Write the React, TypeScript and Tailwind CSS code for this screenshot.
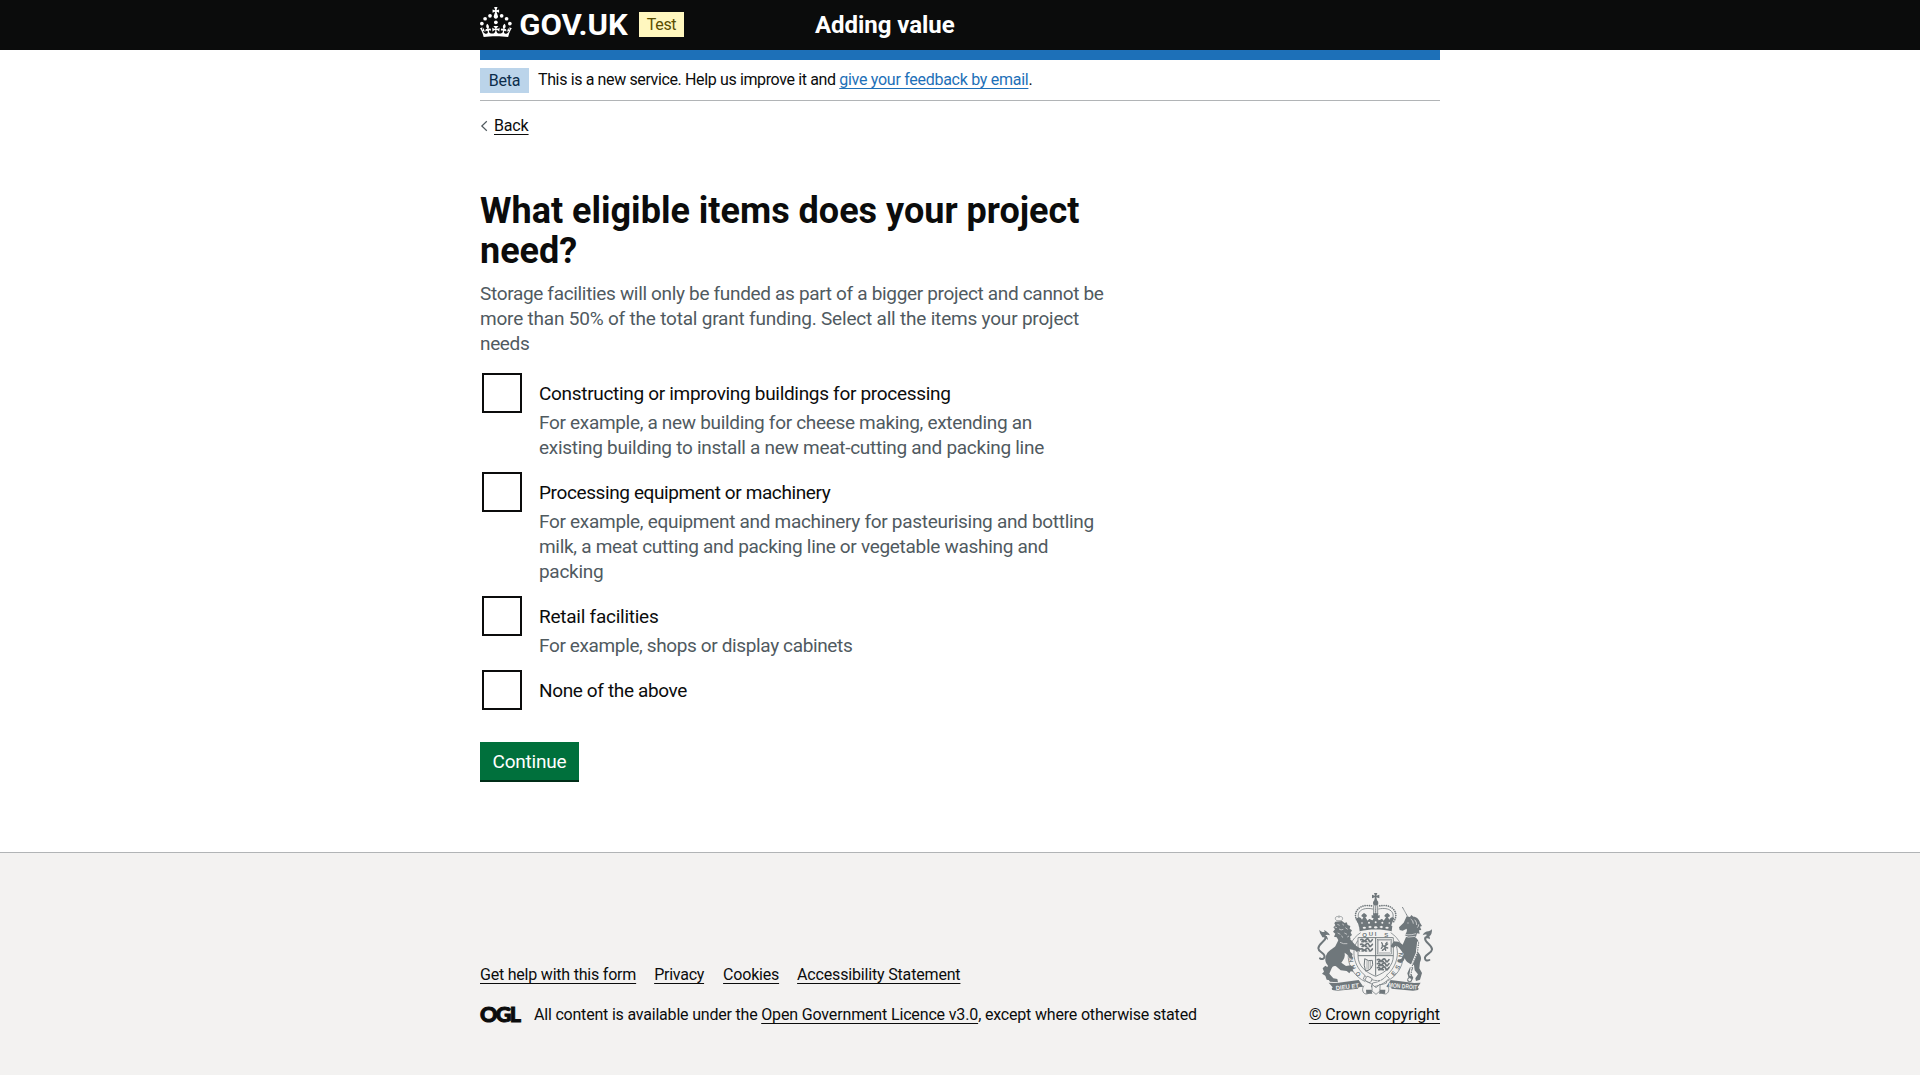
import type { ReactNode } from 'react';

function GovCrown() {
  return (
    <svg viewBox="0 0 324 60" className="h-[30px] w-[162px] shrink-0 overflow-visible fill-white" role="img" aria-label="GOV.UK">
      <circle cx="20" cy="17.6" r="3.7" />
      <circle cx="10.2" cy="23.5" r="3.7" />
      <circle cx="3.7" cy="33.2" r="3.7" />
      <circle cx="31.7" cy="30.6" r="3.7" />
      <circle cx="43.3" cy="17.6" r="3.7" />
      <circle cx="53.2" cy="23.5" r="3.7" />
      <circle cx="59.7" cy="33.2" r="3.7" />
      <path d="M33.1,9.8c.2-.1.3-.3.5-.5l4.6,2.4v-6.8l-4.6,1.5c-.1-.2-.3-.3-.5-.5l1.9-5.9h-6.7l1.9,5.9c-.2.1-.3.3-.5.5l-4.6-1.5v6.8l4.6-2.4c.1.2.3.3.5.5l-2.6,8c-.9,2.8,1.2,5.7,4.1,5.7h0c3,0,5.1-2.9,4.1-5.7l-2.6-8ZM37,37.9s-3.4,3.8-4.1,6.1c2.2,0,4.2-.5,6.4-2.8l-.7,8.5c-2-2.8-4.4-4.1-5.7-3.8.1,3.1.5,6.7,5.8,7.2,3.7.3,6.7-1.5,7-3.8.4-2.6-2-4.3-3.7-1.6-1.4-4.5,2.4-6.1,4.9-3.2-1.9-4.5-1.8-7.7,2.4-10.9,3,4,2.6,7.3-1.2,11.1,2.4-1.3,6.2,0,4,4.6-1.2-2.8-3.7-2.2-4.2.2-.3,1.7.7,3.7,3,4.2,1.9.3,4.7-.9,7-5.9-1.3,0-2.4.7-3.9,1.7l2.4-8c.6,2.3,1.4,3.7,2.2,4.5.6-1.6.5-2.8,0-5.3l5,1.8c-2.6,3.6-5.2,8.7-7.3,17.5-7.4-1.1-15.7-1.7-24.5-1.7h0c-8.8,0-17.1.6-24.5,1.7-2.1-8.9-4.7-13.9-7.3-17.5l5-1.8c-.5,2.5-.6,3.7,0,5.3.8-.8,1.6-2.3,2.2-4.5l2.4,8c-1.5-1-2.6-1.7-3.9-1.7,2.3,5,5.2,6.2,7,5.9,2.3-.4,3.3-2.4,3-4.2-.5-2.4-3-3.1-4.2-.2-2.2-4.6,1.6-6,4-4.6-3.7-3.7-4.2-7.1-1.2-11.1,4.2,3.2,4.3,6.4,2.4,10.9,2.5-2.8,6.3-1.3,4.9,3.2-1.8-2.7-4.1-1-3.7,1.6.3,2.3,3.3,4.1,7,3.8,5.4-.5,5.7-4.2,5.8-7.2-1.3-.2-3.7,1-5.7,3.8l-.7-8.5c2.2,2.3,4.2,2.7,6.4,2.8-.7-2.3-4.1-6.1-4.1-6.1h10.6,0Z" />
      <text x="78.5" y="55.6" textLength="217" lengthAdjust="spacingAndGlyphs" className="font-['Roboto'] text-[60px] font-bold">
        GOV.UK
      </text>
    </svg>
  );
}

function OglLogo() {
  return (
    <svg viewBox="0 0 41 17" className="mr-[13px] h-[17px] w-[41px] shrink-0 overflow-visible fill-[#0b0c0c] stroke-[#0b0c0c]" role="img" aria-label="OGL">
      <text x="0" y="14.8" textLength="41" lengthAdjust="spacing" strokeWidth="1" className="font-['Lato'] text-[21.5px] font-black">
        OGL
      </text>
    </svg>
  );
}

const shieldLions = [
  [212, 178], [212, 192], [212, 206],
  [262, 238], [262, 250], [262, 262],
];

function RoyalCrest() {
  return (
    <svg viewBox="81 38 348 306" className="h-[102px] w-[116px] fill-[#6f777b] stroke-[#6f777b]" role="img" aria-label="Royal coat of arms">
      {/* crown: cross, orb, arches and jewelled rim */}
      <g strokeLinecap="round">
        <path stroke="none" d="M252 38h10l-3 8 9-3v11l-9-3 3 12h-10l3-12-9 3v-11l9 3z" />
        <circle cx="257" cy="68" r="8" stroke="none" />
        <g fill="none">
          <path strokeWidth="5" strokeDasharray="0.1 6.4" d="M203 124C184 98 208 66 250 78M311 124C330 98 306 66 264 78" />
          <path strokeWidth="2.4" d="M208 118C196 98 214 78 248 86M306 118C318 98 300 78 266 86" />
          <path strokeWidth="2.4" d="M251 76V112M263 76V112" />
          <path strokeWidth="5" strokeDasharray="0.1 6" d="M257 80V104" />
        </g>
        <path stroke="none" d="M201 114c5-6 12-4 15 4l4-7-6-3c0-5 4-7 8-10 5 3 9 5 9 10l-5 3 7 10c3-5 7-7 10-3l5 2 3-6-6-2v-8l6 2-2-7h16l-2 7 6-2v8l-6 2 3 6 5-2c3-4 7-2 10 3l7-10-5-3c0-5 4-7 9-10 4 3 8 5 8 10l-6 3 4 7c3-8 10-10 15-4-4 8-8 16-10 26-28-6-68-6-96 0-2-10-6-18-10-26z" />
        <path stroke="none" d="M207 137c30-7 70-7 100 0l-2 16c-28-7-68-7-96 0z" />
        <g fill="#f3f2f1" stroke="none">
          <ellipse cx="223" cy="142" rx="5" ry="3" />
          <path d="M240 136l6 4-6 4-6-4zM274 136l6 4-6 4-6-4z" />
          <ellipse cx="257" cy="141" rx="5" ry="3.5" />
          <ellipse cx="291" cy="142" rx="5" ry="3" />
          <circle cx="237" cy="127" r="3" />
          <circle cx="257" cy="126" r="3" />
          <circle cx="277" cy="127" r="3" />
          <circle cx="216" cy="128" r="2.5" />
          <circle cx="298" cy="128" r="2.5" />
        </g>
      </g>

      {/* garter */}
      <g fill="none" strokeWidth="2.2">
        <path d="M212 157C158 192 162 274 226 304M302 157C356 192 352 274 288 304" />
        <path d="M206 172h102" />
        <path d="M204 180C182 208 190 258 226 286M310 180C332 208 324 258 288 286" />
      </g>
      <g stroke="none" className="font-['Liberation_Sans'] text-[18px] font-bold">
        <text x="217" y="169">Q</text>
        <text x="236" y="167">U</text>
        <text x="254" y="167">I</text>
        <text x="283" y="170">S</text>
        <text transform="translate(199 285) rotate(52)" textAnchor="middle">O</text>
        <text transform="translate(184 263) rotate(68)" textAnchor="middle">H</text>
        <text transform="translate(177 240) rotate(82)" textAnchor="middle">N</text>
        <text transform="translate(338 224) rotate(-86)" textAnchor="middle">N</text>
        <text transform="translate(336 244) rotate(-76)" textAnchor="middle">E</text>
        <text transform="translate(328 264) rotate(-62)" textAnchor="middle">S</text>
        <text transform="translate(315 283) rotate(-48)" textAnchor="middle">E</text>
      </g>

      {/* quartered shield */}
      <path fill="#f3f2f1" strokeWidth="2.4" d="M204 172h106v54c0 32-24 50-53 62-29-12-53-30-53-62z" />
      <path fill="none" strokeWidth="3" d="M257 172v114M204 226h106" />
      <g fill="none" strokeWidth="5" strokeLinecap="round">
        {shieldLions.map(([x, y]) => (
          <path key={`${x}-${y}`} d={`M${x} ${y}q5-2 8 2t8-2t9 2t10-2M${x + 4} ${y + 6}h4M${x + 14} ${y + 6}h4M${x + 26} ${y + 6}h4`} />
        ))}
      </g>
      <rect x="262" y="177" width="43" height="44" fill="none" strokeWidth="1.8" />
      <rect x="266" y="181" width="35" height="36" fill="none" strokeWidth="1" />
      <path fill="none" strokeWidth="4" strokeLinecap="round" d="M275 187q4 4 2 9l8 1 8-6M279 197l-5 7M284 198l3 12M284 200l9 3M277 210l7-5M291 186l-4 5" />
      <path fill="none" strokeWidth="3" strokeLinecap="round" d="M224 236q-4 20 2 34M225 236q10 8 22 4q4 14-4 24q-6 8-16 8" />
      <path fill="none" strokeWidth="1.6" d="M231 240v28M236 242v27M241 242v23" />

      {/* buckle and strap */}
      <g fill="#f3f2f1" strokeWidth="2.2">
        <path d="M224 286c16 14 42 20 62 10l4 12c-22 10-50 6-70-12z" />
        <path d="M290 286c-8 10-24 20-42 22l-4 12c22-2 42-12 54-26z" />
        <rect x="227" y="290" width="18" height="15" rx="4" transform="rotate(26 236 297)" />
        <path d="M246 312l12 10 12-10v20l-12 10-12-10z" />
        <path d="M222 316c-8 10-4 24 6 25 9 0 16-6 18-14M292 316c8 10 4 24-6 25-9 0-14-6-16-14" />
      </g>
      <path stroke="none" d="M228 328h16l3 12h-18zM286 328h-16l-3 12h18z" />
      <g fill="#f3f2f1" stroke="none">
        <circle cx="262" cy="302" r="1.5" />
        <circle cx="272" cy="300" r="1.5" />
      </g>

      {/* lion supporter */}
      <g stroke="none">
        <path fill="none" className="stroke-[#6f777b]" strokeWidth="1.8" d="M140 121c-9-7-1-17 7-10 7-7 16 3 7 10zM147 105v6" />
        <path d="M136 124l20-2 8 6 6-2 3 8 8 3-2 8 7 5-4 7 4 7-6 5 2 7-12 6-14-4-10 3-6-10-8-2 4-9-7-6 6-7-5-6 6-6-3-6z" />
        <path d="M148 174c14-6 28-2 36 6 6 8 12 16 20 20l10 6-5 2 2 7-7-4-3 5-6-6-16-3 2 8 7 6-2 6 4 6-6 1-6-1-4-8-10-8c2 12-2 20-10 30l14 10 14-2 10 8-5 3 4 8-9-1-4 6-8-7-18-2-14-12c-6-2-10 0-13 6l-7 16 12 14 12 2 2 10-24-2-14-20c0-12 4-20 8-28-10-10-10-22-4-34 6-12 18-16 26-24z" />
        <path d="M106 256l-8 8 4 10-6 6 10 6 4 12 10 2 2-10-7-10 6-14z" />
        <path d="M88 148c4 6 10 8 16 7l-2-6c8 4 14 8 18 16-6-2-10-3-14 0 6 4 8 9 8 14-6-7-12-10-17-8-2-8-8-10-9-23z" />
      </g>
      <path fill="none" strokeWidth="6" strokeLinecap="round" d="M108 170c-2 14-22 18-23 34 0 10 14 12 18 21 3 9-6 14-13 9" />
      <g stroke="#f3f2f1" strokeWidth="1.8" fill="none">
        <path d="M142 132l7 3M157 131l5 4M147 146q6 5 13 1M166 142l7 5M143 158l8 4M163 158l8 4M155 166l3 6M134 140l7 2M172 170l5-3" />
        <path d="M150 186q10 6 22 4" />
      </g>

      {/* unicorn supporter */}
      <path fill="none" strokeWidth="3" strokeDasharray="3 1" d="M337 80L353 109" />
      <g stroke="none">
        <path d="M350 108l10 2 4-6 6 5c10 0 18 8 20 18l6 10-6 2 4 10-7 1 2 10-8-1-3 10-20 2-14-6c6-8 8-14 6-20l-12 6-9-2-2-8 14-14z" />
        <path d="M348 170c14-6 30-2 36 10 4 10 0 22-6 30 12 10 20 22 12 36l-2 18 8 14-6 20-12 4-2-8 8-12-10-12-2-16c-14-2-22-8-28-20-4 12-10 14-20 11l-2-6 12-4 8-14-8-10c-6-8-10-14-18-14-4 6-10 6-14 0l8-12c14-4 20 2 28 8z" />
        <path d="M370 262l-8 16 8 14-6 12-12-1 4-10-4-14 8-18z" />
        <path d="M426 146c0 12-2 18-8 22 2 4 2 6 1 9-5-4-9-4-14 0 0-6 2-10 6-13-4-2-8-2-13 1 4-9 10-12 17-12 4-1 8-3 11-7z" />
      </g>
      <path fill="none" strokeWidth="6" strokeLinecap="round" d="M406 172c-6 12 18 20 20 34 1 12-18 14-21 25-1 9 6 12 13 8" />
      <g fill="none" stroke="#f3f2f1" strokeWidth="2">
        <path d="M362 116q8 4 8 14M374 118q6 6 6 16M386 132q0 6-4 10M352 128h4M334 158q18 10 44 2M336 165q18 9 40 3" />
        <path d="M384 184l-4 34-14 34-6 34" strokeWidth="5" />
      </g>
      <path fill="none" strokeWidth="3.4" strokeDasharray="4 3" d="M386 186l-4 32-14 34-6 36" />
      <circle cx="359" cy="298" r="6" fill="#f3f2f1" strokeWidth="3" />

      {/* motto ribbons */}
      <path stroke="none" d="M116 307l24 1 66-9 14 20-14 2-2 4-62 6-15-2-2-4 3-4z" />
      <path stroke="none" d="M392 307l-20 1-70-9-13 20 14 2 2 4 64 6 15-2 2-4-3-4z" />
      <g fill="#f3f2f1" stroke="none" className="font-['Liberation_Sans'] text-[19px] font-bold">
        <text x="137" y="326" textLength="70" lengthAdjust="spacingAndGlyphs" transform="rotate(-6 170 318)">DIEU ET</text>
        <text x="296" y="324" textLength="86" lengthAdjust="spacingAndGlyphs" transform="rotate(5 340 318)">MON DROIT</text>
      </g>
    </svg>
  );
}

function Link({ children, className = '' }: { children: ReactNode; className?: string }) {
  return (
    <a href="#" className={`underline decoration-1 underline-offset-[3px] [text-decoration-skip-ink:none] ${className}`}>
      {children}
    </a>
  );
}

type Line = { text: string; tracking: string };
type Option = { label: Line; hint: Line[] };

const options: Option[] = [
  {
    label: { text: 'Constructing or improving buildings for processing', tracking: 'tracking-[-0.31px]' },
    hint: [
      { text: 'For example, a new building for cheese making, extending an', tracking: 'tracking-[-0.32px]' },
      { text: 'existing building to install a new meat-cutting and packing line', tracking: 'tracking-[-0.28px]' },
    ],
  },
  {
    label: { text: 'Processing equipment or machinery', tracking: 'tracking-[-0.39px]' },
    hint: [
      { text: 'For example, equipment and machinery for pasteurising and bottling', tracking: 'tracking-[-0.3px]' },
      { text: 'milk, a meat cutting and packing line or vegetable washing and', tracking: 'tracking-[-0.3px]' },
      { text: 'packing', tracking: 'tracking-[-0.3px]' },
    ],
  },
  {
    label: { text: 'Retail facilities', tracking: 'tracking-[-0.25px]' },
    hint: [{ text: 'For example, shops or display cabinets', tracking: 'tracking-[-0.37px]' }],
  },
  { label: { text: 'None of the above', tracking: 'tracking-[-0.36px]' }, hint: [] },
];

function CheckboxItem({ label, hint }: Option) {
  return (
    <div className="flex">
      <div className="mt-0.5 ml-0.5 h-10 w-10 shrink-0 border-2 border-[#0b0c0c] bg-white" />
      <div className="ml-[17px] whitespace-nowrap">
        <div className={`pt-[10px] pb-1 leading-[25px] ${label.tracking}`}>{label.text}</div>
        {hint.length === 0 && <div className="h-[5px]" />}
        {hint.map((line) => (
          <div key={line.text} className={`leading-[25px] text-[#505a5f] ${line.tracking}`}>
            {line.text}
          </div>
        ))}
      </div>
    </div>
  );
}

export default function App() {
  return (
    <div className="flex min-h-[1075px] flex-col bg-white font-['Roboto',sans-serif] text-base text-[#0b0c0c]">
      <header className="h-[50px] bg-[#0b0c0c]">
        <div className="mx-auto flex h-full w-[960px] items-start">
          <div className="flex w-[335px] items-start">
            <div className="-mr-[3px] pt-[7px]">
              <GovCrown />
            </div>
            <span className="mt-3 flex h-[25px] w-[45px] items-center justify-center bg-[#fff7bf] text-base tracking-[-0.3px] text-[#594d00]">
              Test
            </span>
          </div>
          <div className="pt-[10px] text-2xl leading-[30px] font-bold tracking-[-0.05px] whitespace-nowrap text-white">Adding value</div>
        </div>
      </header>

      <div className="mx-auto w-[960px]">
        <div className="h-[10px] bg-[#1d70b8]" />
        <div className="flex h-[41px] items-start border-b border-[#b1b4b6] pt-2">
          <strong className="mr-[9px] flex h-[25px] w-[49px] items-center justify-center bg-[#bbd4ea] font-normal tracking-[-0.2px] text-[#0c2d4a]">
            Beta
          </strong>
          <p className="leading-[23px] whitespace-nowrap">
            <span className="tracking-[-0.37px]">This is a new service. Help us improve it and </span>
            <Link className="tracking-[-0.28px] text-[#1d70b8]">give your feedback by email</Link>.
          </p>
        </div>

        <div className="mt-[15px] flex h-5 items-center">
          <svg viewBox="0 0 8 12" className="mr-[6px] h-3 w-2 fill-none stroke-[#505a5f]" strokeWidth="1.2">
            <path d="M6.8 1.2L1.8 6L6.8 10.8" />
          </svg>
          <Link className="leading-5 tracking-[-0.15px]">Back</Link>
        </div>

        <main className="mt-[55px] w-[640px] text-[19px]">
          <h1 className="text-4xl leading-10 font-bold whitespace-nowrap">
            What eligible items does your project
            <br />
            need?
          </h1>
          <div className="mt-[10px] leading-[25px] whitespace-nowrap text-[#505a5f]">
            <p className="tracking-[-0.33px]">Storage facilities will only be funded as part of a bigger project and cannot be</p>
            <p className="tracking-[-0.2px]">more than 50% of the total grant funding. Select all the items your project</p>
            <p className="tracking-[-0.35px]">needs</p>
          </div>
          <div className="mt-[15px] flex flex-col gap-[10px]">
            {options.map((option) => (
              <CheckboxItem key={option.label.text} {...option} />
            ))}
          </div>
          <button className="mt-[30px] flex h-[38px] w-[99px] items-center justify-center bg-[#00703c] pt-0.5 text-[19px] tracking-[-0.2px] text-white shadow-[0_2px_0_#002d18]">
            Continue
          </button>
        </main>
      </div>

      <footer className="mt-[72px] grow border-t border-[#b1b4b6] bg-[#f3f2f1]">
        <div className="mx-auto flex w-[960px] items-end justify-between pt-10 whitespace-nowrap">
          <div>
            <div className="flex leading-5">
              <Link className="mr-[18px] tracking-[-0.21px]">Get help with this form</Link>
              <Link className="mr-[19px] tracking-[-0.25px]">Privacy</Link>
              <Link className="mr-[18px] tracking-[-0.2px]">Cookies</Link>
              <Link className="tracking-[-0.17px]">Accessibility Statement</Link>
            </div>
            <div className="mt-5 flex h-5 items-center leading-5">
              <OglLogo />
              <p>
                <span className="tracking-[-0.2px]">All content is available under the </span>
                <Link className="tracking-[-0.15px]">Open Government Licence v3.0</Link>
                <span className="tracking-[-0.18px]">, except where otherwise stated</span>
              </p>
            </div>
          </div>
          <div className="flex flex-col items-end">
            <div className="mr-[7px]">
              <RoyalCrest />
            </div>
            <Link className="mt-[10px] leading-5 tracking-[-0.08px]">© Crown copyright</Link>
          </div>
        </div>
      </footer>
    </div>
  );
}
